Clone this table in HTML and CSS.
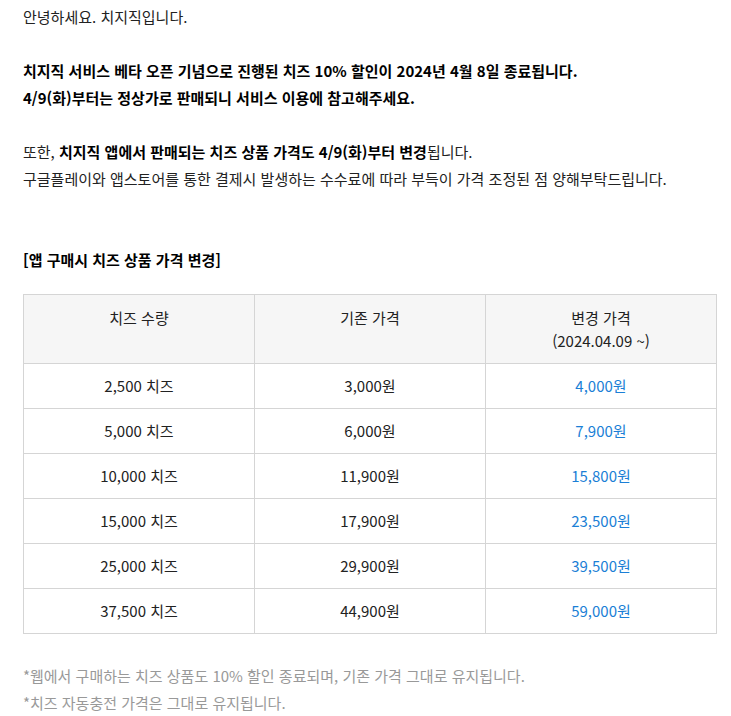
FILE: index.html
```html
<!DOCTYPE html>
<html lang="ko">
<head>
<meta charset="utf-8">
<link rel="stylesheet" href="styles.css">
</head>
<body>
<div class="notice">
  <p>안녕하세요. 치지직입니다.</p>
  <p class="blank">&nbsp;</p>
  <p><b>치지직 서비스 베타 오픈 기념으로 진행된 치즈 10% 할인이 2024년 4월 8일 종료됩니다.</b></p>
  <p><b>4/9(화)부터는 정상가로 판매되니 서비스 이용에 참고해주세요.</b></p>
  <p class="blank">&nbsp;</p>
  <p>또한, <b>치지직 앱에서 판매되는 치즈 상품 가격도 4/9(화)부터 변경</b>됩니다.</p>
  <p>구글플레이와 앱스토어를 통한 결제시 발생하는 수수료에 따라 부득이 가격 조정된 점 양해부탁드립니다.</p>
  <p class="blank">&nbsp;</p>
  <p class="blank">&nbsp;</p>
  <p><b>[앱 구매시 치즈 상품 가격 변경]</b></p>
  <table class="price">
    <thead>
      <tr><th>치즈 수량</th><th>기존 가격</th><th>변경 가격<br>(2024.04.09 ~)</th></tr>
    </thead>
    <tbody>
      <tr><td>2,500 치즈</td><td>3,000원</td><td class="new">4,000원</td></tr>
      <tr><td>5,000 치즈</td><td>6,000원</td><td class="new">7,900원</td></tr>
      <tr><td>10,000 치즈</td><td>11,900원</td><td class="new">15,800원</td></tr>
      <tr><td>15,000 치즈</td><td>17,900원</td><td class="new">23,500원</td></tr>
      <tr><td>25,000 치즈</td><td>29,900원</td><td class="new">39,500원</td></tr>
      <tr><td>37,500 치즈</td><td>44,900원</td><td class="new">59,000원</td></tr>
    </tbody>
  </table>
  <div class="notes">
    <p>*웹에서 구매하는 치즈 상품도 10% 할인 종료되며, 기존 가격 그대로 유지됩니다.</p>
    <p>*치즈 자동충전 가격은 그대로 유지됩니다.</p>
  </div>
</div>
</body>
</html>
```

FILE: styles.css
```css
html, body {
  margin: 0;
  padding: 0;
  background: #fff;
}
body {
  font-family: "Noto Sans CJK KR", "Noto Sans", sans-serif;
  font-size: 15px;
  color: #222;
}
.notice {
  padding: 3px 15px 0 23px;
}
.notice p {
  margin: 0;
  line-height: 27px;
}
.notice b {
  font-weight: 700;
  color: #000;
}
.price {
  width: 694px;
  border-collapse: collapse;
  table-layout: fixed;
  margin-top: 21px;
  font-size: 15px;
  color: #222;
}
.price th,
.price td {
  border: 1px solid #d5d5d5;
  text-align: center;
  font-weight: 400;
}
.price th {
  background: #f6f6f6;
  height: 69px;
  line-height: 23px;
  vertical-align: top;
  padding: 11px 4px 0;
  box-sizing: border-box;
}
.price td {
  height: 45px;
  padding: 0 4px;
  box-sizing: border-box;
  line-height: 20px;
}
.price td.new {
  color: #1b7fd6;
}
.notes {
  margin-top: 28px;
}
.notes p {
  color: #999;
}
```
